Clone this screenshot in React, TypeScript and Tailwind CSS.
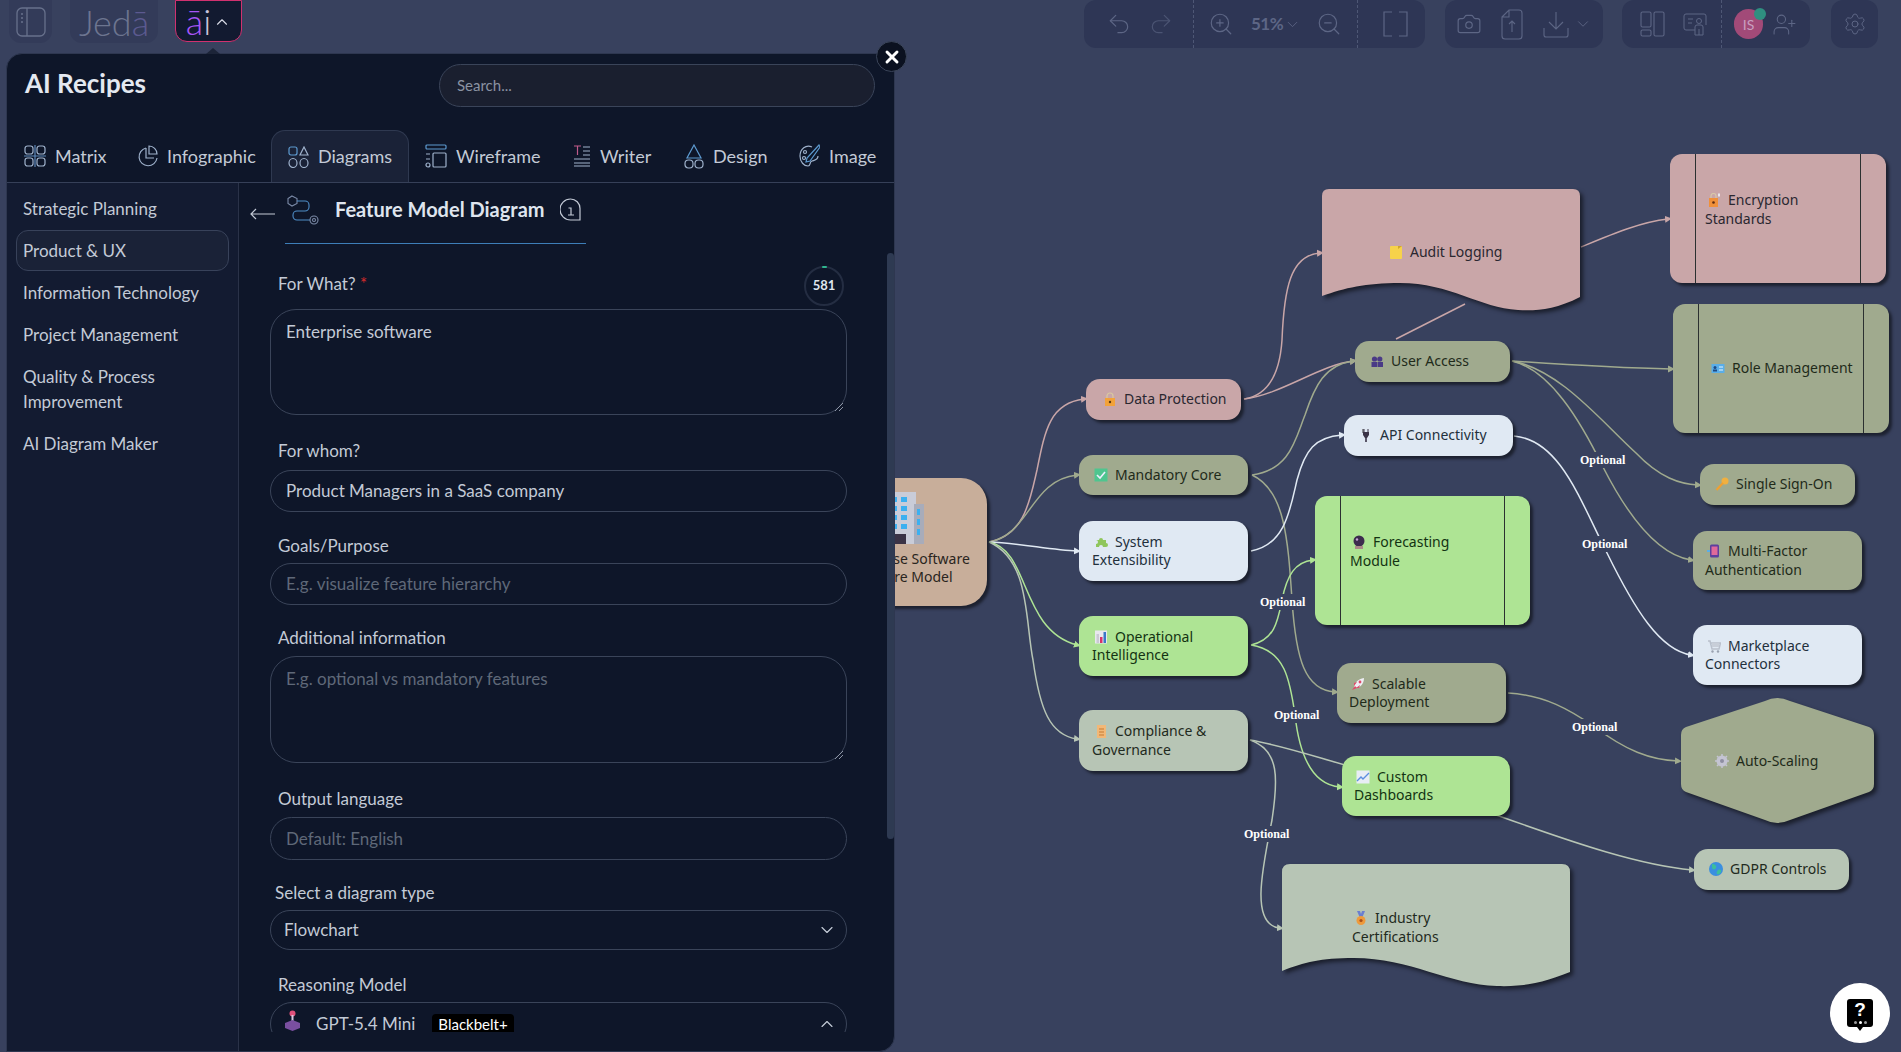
import { ChevronDown, ChevronUp, Redo2, Settings, Undo2, X, ZoomIn, ZoomOut, Camera, UserPlus } from "lucide-react";
import type { ReactNode } from "react";

const ROSE = "#c9a6a8";
const OLIVE = "#a0aa8e";
const ICE = "#e0e9f3";
const LIME = "#aee494";
const SAGE = "#b7c5b5";

const edges: { d: string; c: string; arrow?: boolean }[] = [
  { d: "M989,542 C1025,535 1030,500 1037,470 C1045,430 1050,403 1084,399", c: ROSE },
  { d: "M989,542 C1030,535 1030,480 1077,475", c: OLIVE },
  { d: "M989,542 C1020,543 1050,550 1077,551", c: ICE },
  { d: "M989,542 C1030,550 1020,630 1077,645", c: LIME },
  { d: "M989,542 C1030,560 1025,620 1033,660 C1040,710 1050,735 1077,739", c: SAGE },
  { d: "M1244,399 C1270,395 1280,370 1282,340 C1284,290 1290,255 1320,253", c: ROSE },
  { d: "M1244,399 C1280,395 1320,365 1353,361", c: ROSE },
  { d: "M1252,475 C1290,470 1295,440 1305,415 C1315,385 1325,365 1353,361", c: OLIVE },
  { d: "M1252,475 C1285,490 1288,540 1292,600 C1296,660 1305,690 1335,692", c: OLIVE },
  { d: "M1251,551 C1285,545 1290,510 1297,480 C1305,450 1315,437 1342,435", c: ICE },
  { d: "M1251,645 C1275,640 1278,620 1282,600 C1287,575 1295,562 1313,560", c: LIME },
  { d: "M1251,645 C1285,650 1290,680 1295,715 C1300,760 1315,785 1340,787", c: LIME },
  { d: "M1250,740 C1280,745 1310,755 1345,765 L1499,816 C1580,845 1640,865 1692,870", c: SAGE },
  { d: "M1250,740 C1280,750 1278,780 1272,820 C1262,870 1250,925 1280,928", c: SAGE },
  { d: "M1512,361 C1570,365 1620,368 1671,369", c: OLIVE },
  { d: "M1512,361 C1560,370 1600,420 1636,453 C1660,478 1680,484 1698,485", c: OLIVE },
  { d: "M1512,361 C1550,370 1580,420 1603,467 C1630,520 1660,555 1691,560", c: OLIVE },
  { d: "M1514,436 C1560,440 1580,500 1607,553 C1635,610 1660,650 1691,655", c: ICE },
  { d: "M1508,693 C1545,695 1570,710 1595,727 C1625,750 1650,760 1678,761", c: OLIVE },
  { d: "M1581,247 C1610,235 1640,222 1668,219", c: ROSE },
  { d: "M1396,339 L1465,304", c: ROSE },
];

const edgeLabels = [
  { x: 1601, y: 460 },
  { x: 1603, y: 544 },
  { x: 1281, y: 602 },
  { x: 1295, y: 715 },
  { x: 1593, y: 727 },
  { x: 1265, y: 834 },
];

const Em = ({ children }: { children: ReactNode }) => (
  <svg viewBox="0 0 14 14" className="mr-[7px] inline-block h-[14px] w-[14px] align-[-2px]">
    {children}
  </svg>
);

const emoji: Record<string, ReactNode> = {
  lock: <><path d="M4 6V4a3 3 0 0 1 6 0v2" fill="none" stroke="#d9c9a0" strokeWidth="1.2" /><rect x="2" y="6" width="10" height="8" fill="#f2a23a" /><circle cx="7" cy="10" r="1.2" fill="#5b3a12" /></>,
  check: <><rect x="0.5" y="0.5" width="13" height="13" fill="#4fc58f" /><path d="M3 7l3 3 5-6" fill="none" stroke="#eef" strokeWidth="1.6" /></>,
  puzzle: <path d="M2 5h3a2 2 0 1 1 4 0h3v3a2 2 0 1 1 0 4H9a2 2 0 1 0-4 0H2V9a2 2 0 1 0 0-4z" fill="#8fc65c" />,
  chart: <><rect x="1" y="0.5" width="12" height="13" fill="#e8e8ee" /><rect x="2.5" y="4" width="2.5" height="9" fill="#c9c9d4" /><rect x="6" y="7" width="2.5" height="6" fill="#d8326a" /><rect x="9.5" y="2" width="2.5" height="11" fill="#3a78c8" /></>,
  scroll: <><rect x="3" y="1" width="9" height="13" fill="#f2b878" /><path d="M5 5h5M5 8h5M5 11h5" stroke="#c77a32" /></>,
  note: <><rect x="1" y="1" width="12" height="13" rx="1" fill="#f7d24a" /><path d="M9 1l4 0-4 3z" fill="#cfa52c" /></>,
  people: <><circle cx="4.5" cy="5" r="2.6" fill="#4a3a86" /><circle cx="9.8" cy="5" r="2.6" fill="#4a3a86" /><rect x="1.5" y="8" width="5.5" height="5" fill="#4a3a86" /><rect x="7.5" y="8" width="5.5" height="5" fill="#4a3a86" /></>,
  plug: <><path d="M4 1v4M10 1v0" stroke="#333" /><path d="M4 4h6v3l-2 3H6L4 7z" fill="#3a3346" /><rect x="6.2" y="9" width="1.6" height="5" fill="#3a3346" /><path d="M5 1v3M9 1v3" stroke="#3a3346" /></>,
  crystal: <><circle cx="7" cy="6" r="5.5" fill="#3d2b4e" /><circle cx="5" cy="4.5" r="1.2" fill="#c8a6d8" /><rect x="3" y="11" width="8" height="3" fill="#a88" /></>,
  rocket: <><path d="M3 11C3 6 7 2 13 1c0 6-4 10-9 10z" fill="#eeeef4" /><circle cx="9" cy="5" r="1.4" fill="#e04a6a" /><path d="M1 13l3-4 2 2z" fill="#e04a6a" /><path d="M3 6l3-1-3 4zM8 11l1-3-4 3z" fill="#e04a6a" /></>,
  graph: <><rect x="0.5" y="0.5" width="13" height="13" fill="#e8edf5" /><path d="M1 11l4-4 2 2 6-6" fill="none" stroke="#5c8fe0" strokeWidth="1.4" /></>,
  medal: <><path d="M3 0l3 7h2l3-7-3 0-1 3-1-3z" fill="#6a7fd0" /><circle cx="7" cy="9.5" r="4.5" fill="#ee9a3c" /><circle cx="7" cy="9.5" r="1.6" fill="#a8501c" /></>,
  key: <><circle cx="10" cy="4" r="3.5" fill="#f0b040" /><path d="M8 6L1.5 13" stroke="#f0a030" strokeWidth="2.2" /></>,
  id: <><rect x="0.5" y="3" width="13" height="9" fill="#5aaee8" /><circle cx="4" cy="6.5" r="1.5" fill="#1c4a86" /><rect x="2" y="8.5" width="4" height="2" fill="#1c4a86" /><path d="M8 6h4M8 9h4" stroke="#e8f4ff" /></>,
  phone: <><rect x="3" y="0.5" width="9" height="13" rx="1.5" fill="#5c3f9e" /><rect x="4.5" y="2.5" width="6" height="8.5" fill="#e06a9a" /><path d="M0 7h3" stroke="#5aaee8" strokeWidth="2" /></>,
  cart: <><path d="M1 2h2l2 8h7l1.500-6H4" fill="none" stroke="#b9c0cc" strokeWidth="1.5" /><rect x="5" y="4" width="7" height="4" fill="#c8ced8" /><circle cx="5.500" cy="12.500" r="1.200" fill="#9aa2b0" /><circle cx="11" cy="12.500" r="1.200" fill="#9aa2b0" /></>,
  gear: <><circle cx="7" cy="7" r="5.500" fill="#c4c4d2" /><circle cx="7" cy="7" r="2" fill="#8e8ea2" /><path d="M7 0v2M7 12v2M0 7h2M12 7h2M2 2l1.500 1.500M10.500 10.500L12 12M12 2l-1.500 1.500M3.500 10.500L2 12" stroke="#c4c4d2" strokeWidth="1.500" /></>,
  globe: <><circle cx="7" cy="7" r="7" fill="#3a8fe0" /><path d="M3 2c3 0 5 2 4 4S3 8 3 5zM9 8c2-1 4 0 3 2s-3 3-4 2 0-3 1-4z" fill="#3cbf9a" /></>,
  lockkey: <><rect x="2" y="5" width="9" height="9" fill="#f0903a" /><path d="M4 5V3a2.500 2.500 0 0 1 5 0v2" fill="none" stroke="#d8c8a8" strokeWidth="1.200" /><circle cx="6.500" cy="9.500" r="1.300" fill="#5b2a12" /><rect x="11" y="0.500" width="2" height="3" fill="#e8e8f0" /></>,
};

type NodeData = {
  x: string;
  bg: string;
  fg: string;
  pl: string;
  icon: string;
  first: string;
  second?: string;
};

const nodes: NodeData[] = [
  { x: "left-[1086px] top-[379px] w-[155px] h-[41px] rounded-[14px]", bg: "bg-[#c9a6a8]", fg: "text-[#2a2730]", pl: "pl-[15px]", icon: "lock", first: "Data Protection" },
  { x: "left-[1079px] top-[455px] w-[169px] h-[40px] rounded-[14px]", bg: "bg-[#a0aa8e]", fg: "text-[#1f2a1a]", pl: "pl-[13px]", icon: "check", first: "Mandatory Core" },
  { x: "left-[1079px] top-[521px] w-[169px] h-[60px] rounded-[14px]", bg: "bg-[#e0e9f3]", fg: "text-[#23303c]", pl: "pl-[13px]", icon: "puzzle", first: "System", second: "Extensibility" },
  { x: "left-[1079px] top-[616px] w-[169px] h-[60px] rounded-[14px]", bg: "bg-[#aee494]", fg: "text-[#133312]", pl: "pl-[13px]", icon: "chart", first: "Operational", second: "Intelligence" },
  { x: "left-[1079px] top-[710px] w-[169px] h-[61px] rounded-[14px]", bg: "bg-[#b7c5b5]", fg: "text-[#1f2a20]", pl: "pl-[13px]", icon: "scroll", first: "Compliance &", second: "Governance" },
  { x: "left-[1355px] top-[341px] w-[155px] h-[41px] rounded-[14px]", bg: "bg-[#a0aa8e]", fg: "text-[#1f2a1a]", pl: "pl-[13px]", icon: "people", first: "User Access" },
  { x: "left-[1344px] top-[415px] w-[169px] h-[41px] rounded-[14px]", bg: "bg-[#e0e9f3]", fg: "text-[#23303c]", pl: "pl-[13px]", icon: "plug", first: "API Connectivity" },
  { x: "left-[1700px] top-[464px] w-[155px] h-[41px] rounded-[14px]", bg: "bg-[#a0aa8e]", fg: "text-[#1f2a1a]", pl: "pl-[13px]", icon: "key", first: "Single Sign-On" },
  { x: "left-[1693px] top-[531px] w-[169px] h-[59px] rounded-[14px]", bg: "bg-[#a0aa8e]", fg: "text-[#1f2a1a]", pl: "pl-[12px]", icon: "phone", first: "Multi-Factor", second: "Authentication" },
  { x: "left-[1693px] top-[625px] w-[169px] h-[60px] rounded-[14px]", bg: "bg-[#e0e9f3]", fg: "text-[#23303c]", pl: "pl-[12px]", icon: "cart", first: "Marketplace", second: "Connectors" },
  { x: "left-[1337px] top-[663px] w-[169px] h-[60px] rounded-[14px]", bg: "bg-[#a0aa8e]", fg: "text-[#1f2a1a]", pl: "pl-[12px]", icon: "rocket", first: "Scalable", second: "Deployment" },
  { x: "left-[1342px] top-[756px] w-[168px] h-[60px] rounded-[14px]", bg: "bg-[#aee494]", fg: "text-[#133312]", pl: "pl-[12px]", icon: "graph", first: "Custom", second: "Dashboards" },
  { x: "left-[1694px] top-[849px] w-[155px] h-[41px] rounded-[14px]", bg: "bg-[#b7c5b5]", fg: "text-[#1f2a20]", pl: "pl-[13px]", icon: "globe", first: "GDPR Controls" },
];

const subroutines: NodeData[] = [
  { x: "left-[1670px] top-[154px] w-[216px] h-[129px] rounded-[12px]", bg: "bg-[#c9a6a8]", fg: "text-[#2a2730]", pl: "pl-[9px]", icon: "lockkey", first: "Encryption", second: "Standards" },
  { x: "left-[1673px] top-[304px] w-[216px] h-[129px] rounded-[12px]", bg: "bg-[#a0aa8e]", fg: "text-[#1f2a1a]", pl: "pl-[10px]", icon: "id", first: "Role Management" },
  { x: "left-[1315px] top-[496px] w-[215px] h-[129px] rounded-[12px]", bg: "bg-[#aee494]", fg: "text-[#133312]", pl: "pl-[9px]", icon: "crystal", first: "Forecasting", second: "Module" },
];

const NodeText = ({ n }: { n: NodeData }) => (
  <div className="text-[14px] leading-[18.5px]">
    <div className="whitespace-nowrap pl-[2px]">
      <Em>{emoji[n.icon]}</Em>
      {n.first}
    </div>
    {n.second && <div className="whitespace-nowrap">{n.second}</div>}
  </div>
);

const Canvas = () => (
  <div className="absolute inset-0 font-['Noto_Sans',sans-serif]">
    <svg className="absolute inset-0" width="1901" height="1052" fill="none">
      <defs>
        {[ROSE, OLIVE, ICE, LIME, SAGE].map((c) => (
          <marker key={c} id={`a${c.slice(1)}`} markerWidth="8" markerHeight="8" refX="3" refY="4" orient="auto" markerUnits="userSpaceOnUse">
            <path d="M0,0.500 L7,4 L0,7.500 Z" fill={c} />
          </marker>
        ))}
      </defs>
      {edges.map((e, i) => (
        <path key={i} d={e.d} stroke={e.c} strokeWidth="1.5" markerEnd={e.d.startsWith("M1396") ? undefined : `url(#a${e.c.slice(1)})`} />
      ))}
    </svg>

    {/* wave and hexagon nodes are real drawings, text sits on top */}
    <svg className="absolute inset-0 drop-shadow-[3px_3px_2px_rgba(0,0,0,0.55)]" width="1901" height="1052">
      <path d="M1329,189 H1573 Q1580,189 1580,196 V297 C1555,310 1535,311 1518,310 C1480,308 1450,283 1400,283 C1365,283 1345,288 1322,296 V196 Q1322,189 1329,189 Z" fill={ROSE} />
      <path d="M1290,864 H1562 Q1570,864 1570,872 V972 C1545,982 1525,987 1497,986 C1450,985 1410,958 1354,958 C1320,958 1305,962 1282,971 V872 Q1282,864 1290,864 Z" fill={SAGE} />
      <path d="M1765,701 Q1777,695 1790,701 L1869,727 Q1874,729 1874,735 V784 Q1874,790 1869,792 L1790,820 Q1777,826 1765,820 L1686,792 Q1681,790 1681,784 V735 Q1681,729 1686,727 Z" fill={OLIVE} />
    </svg>
    <div className="absolute left-[1387px] top-[243px] text-[#2a2730]">
      <NodeText n={{ x: "", bg: "", fg: "", pl: "", icon: "note", first: "Audit Logging" }} />
    </div>
    <div className="absolute left-[1352px] top-[909px] text-[#1f2a20]">
      <NodeText n={{ x: "", bg: "", fg: "", pl: "", icon: "medal", first: "Industry", second: "Certifications" }} />
    </div>
    <div className="absolute left-[1713px] top-[752px] text-[#1f2a1a]">
      <NodeText n={{ x: "", bg: "", fg: "", pl: "", icon: "gear", first: "Auto-Scaling" }} />
    </div>

    {/* root */}
    <div className="absolute left-[823px] top-[478px] flex h-[128px] w-[164px] flex-col items-center rounded-[26px] bg-[#c8ae9a] pt-[12px] text-[14px] leading-[18px] text-[#2a2520] shadow-[3px_3px_3px_rgba(0,0,0,0.5)]">
      <svg viewBox="0 0 50 54" className="h-[54px] w-[50px]">
        <rect x="6" y="2" width="30" height="52" fill="#c9ccd8" />
        <rect x="34" y="14" width="10" height="40" fill="#a8acba" />
        <g fill="#3cb0f0">
          <rect x="11" y="7" width="6" height="5" />
          <rect x="21" y="7" width="6" height="5" />
          <rect x="11" y="16" width="6" height="5" />
          <rect x="21" y="16" width="6" height="5" />
          <rect x="11" y="25" width="6" height="5" />
          <rect x="21" y="25" width="6" height="5" />
          <rect x="11" y="34" width="6" height="5" />
          <rect x="21" y="34" width="6" height="5" />
          <rect x="37" y="19" width="3" height="6" />
          <rect x="37" y="29" width="3" height="6" />
          <rect x="37" y="39" width="3" height="6" />
        </g>
        <rect x="14" y="44" width="12" height="10" fill="#3a3346" />
      </svg>
      <div className="mt-[6px] whitespace-nowrap text-center">
        Enterprise Software
        <br />
        Feature Model
      </div>
    </div>

    {nodes.map((n) => (
      <div key={n.first} className={`absolute flex items-center shadow-[3px_3px_3px_rgba(0,0,0,0.5)] ${n.x} ${n.bg} ${n.fg} ${n.pl}`}>
        <NodeText n={n} />
      </div>
    ))}

    {subroutines.map((n) => (
      <div key={n.first} className={`absolute flex shadow-[3px_3px_3px_rgba(0,0,0,0.5)] ${n.x} ${n.bg} ${n.fg}`}>
        <div className="w-[26px] border-r border-[#2b3030]" />
        <div className={`flex flex-1 items-center ${n.pl} ${n.first === "Forecasting" || n.first === "Encryption" ? "pb-[18px]" : ""}`}>
          <NodeText n={n} />
        </div>
        <div className="w-[26px] border-l border-[#2b3030]" />
      </div>
    ))}

    {edgeLabels.map((l) => (
      <div
        key={l.x}
        style={{ left: l.x - 21, top: l.y - 8 }}
        className="absolute bg-[#38415e] font-['Liberation_Serif',serif] text-[12px] leading-[16px] font-bold text-white"
      >
        Optional
      </div>
    ))}
  </div>
);

const Dash = ({ ml }: { ml: string }) => <div className={`h-full border-l border-dashed border-[#4e5775] ${ml}`} />;

const TopBar = () => (
  <div className="relative flex h-[48px] items-start text-[#5d6685]">
    <div className="ml-[9px] flex h-[43px] w-[43px] items-center justify-center rounded-b-[12px] bg-[#333b59]">
      <svg width="30" height="30" viewBox="0 0 30 30" fill="none" stroke="#68718c" strokeWidth="1.3">
        <rect x="1" y="1" width="28" height="28" rx="5" />
        <path d="M11 1v28M5 7h2M5 11h2M5 15h2" />
      </svg>
    </div>
    <div className="ml-[18px] flex h-[43px] w-[88px] items-center justify-center rounded-b-[12px] bg-[#333b59] font-['Lato',sans-serif] text-[36px] leading-[40px] font-light text-[#6d7590]">
      Jed<span className="text-[#5c5a90]">ā</span>
    </div>
    <div className="ml-[17px] flex h-[42px] w-[67px] items-center justify-center rounded-b-[12px] border border-[#d1316f] bg-[#121a30] font-['Lato',sans-serif] text-[36px] leading-[36px] font-light text-[#a855f7]">
      ā<span className="text-[#c9c4dc]">i</span>
      <ChevronUp size={18} strokeWidth={1.5} className="mt-[2px] ml-[2px] text-[#d8dbe6]" />
    </div>

    <div className="ml-auto flex h-[48px] w-[341px] items-center rounded-[12px] bg-[#2e3655]">
      <Undo2 size={26} strokeWidth={1.1} className="ml-[22px]" />
      <Redo2 size={26} strokeWidth={1.1} className="ml-[16px] text-[#4b5473]" />
      <Dash ml="ml-[19px]" />
      <ZoomIn size={26} strokeWidth={1.1} className="ml-[14px]" />
      <span className="ml-[17px] w-[28px] font-['Lato',sans-serif] text-[17px] font-bold tracking-[-0.5px]">51%</span>
      <ChevronDown size={17} strokeWidth={1.2} className="ml-[5px]" />
      <ZoomOut size={26} strokeWidth={1.1} className="ml-[15px]" />
      <Dash ml="ml-[15px]" />
      <svg width="25" height="26" viewBox="0 0 25 26" fill="none" stroke="currentColor" strokeWidth="1.2" className="ml-[25px]">
        <path d="M9 1H1v24h8M16 1h8v24h-8" />
      </svg>
    </div>

    <div className="ml-[20px] flex h-[48px] w-[158px] items-center rounded-[12px] bg-[#2e3655]">
      <Camera size={26} strokeWidth={1.1} className="ml-[11px]" />
      <svg width="22" height="31" viewBox="0 0 22 31" fill="none" stroke="currentColor" strokeWidth="1.1" className="ml-[19px]">
        <path d="M1 8l7-7h10a3 3 0 0 1 3 3v23a3 3 0 0 1-3 3H4a3 3 0 0 1-3-3zM8 1v7H1M11 23V12M8 15l3-3 3 3" />
      </svg>
      <svg width="26" height="27" viewBox="0 0 26 27" fill="none" stroke="currentColor" strokeWidth="1.1" className="ml-[20px]">
        <path d="M13 1v17M6 11l7 7 7-7M1 17v7a2 2 0 0 0 2 2h20a2 2 0 0 0 2-2v-7" />
      </svg>
      <ChevronDown size={18} strokeWidth={1.2} className="ml-[5px]" />
    </div>

    <div className="ml-[19px] flex h-[48px] w-[188px] items-center rounded-[12px] bg-[#2e3655]">
      <svg width="25" height="26" viewBox="0 0 25 26" fill="none" stroke="currentColor" strokeWidth="1.1" className="ml-[18px]">
        <rect x="1" y="1" width="10" height="15" rx="1.500" />
        <rect x="1" y="19" width="10" height="6" rx="1.500" />
        <rect x="14" y="1" width="10" height="24" rx="1.500" />
      </svg>
      <svg width="24" height="23" viewBox="0 0 24 23" fill="none" stroke="currentColor" strokeWidth="1" className="ml-[18px]">
        <path d="M12 17H3a2 2 0 0 1-2-2V3a2 2 0 0 1 2-2h18a2 2 0 0 1 2 2v9M5 6h5M5 10h4" />
        <circle cx="16" cy="8" r="2.500" />
        <path d="M12 22v-8a2 2 0 0 1 2-2h4a2 2 0 0 1 2 2v8h-8zM16 16v6" />
      </svg>
      <Dash ml="ml-[14px]" />
      <div className="relative ml-[12px] flex h-[30px] w-[29px] items-center justify-center rounded-full bg-[#a24a78] font-['Lato',sans-serif] text-[14px] text-[#c9a0c0]">
        IS
        <span className="absolute top-[-1px] right-[-3px] h-[12px] w-[12px] rounded-full bg-[#2f8f80]" />
      </div>
      <UserPlus size={25} strokeWidth={1} className="ml-[9px]" />
    </div>

    <div className="mr-[23px] ml-[21px] flex h-[48px] w-[47px] items-center justify-center rounded-[12px] bg-[#2e3655]">
      <Settings size={24} strokeWidth={1} />
    </div>
  </div>
);

const IconStroke = "#9fb2cc";

const tabs: { label: string; w: string; icon: ReactNode; active?: boolean }[] = [
  {
    label: "Matrix",
    w: "w-[114px]",
    icon: (
      <svg width="22" height="22" viewBox="0 0 22 22" fill="none" stroke={IconStroke} strokeWidth="1.2">
        <rect x="1" y="1" width="8" height="8" rx="2.500" />
        <rect x="13" y="1" width="8" height="8" rx="2.500" />
        <rect x="1" y="13" width="8" height="8" rx="2.500" />
        <rect x="13" y="13" width="8" height="8" rx="2.500" />
        <path d="M0 11h22M11 0v22" stroke="#5d87b8" />
      </svg>
    ),
  },
  {
    label: "Infographic",
    w: "w-[149px]",
    icon: (
      <svg width="20" height="22" viewBox="0 0 20 22" fill="none" stroke={IconStroke} strokeWidth="1.2">
        <path d="M8 3a9 9 0 1 0 11 10" />
        <path d="M11 1a8 8 0 0 1 8 8h-8zM8 3v10h8" />
      </svg>
    ),
  },
  {
    label: "Diagrams",
    w: "w-[138px]",
    active: true,
    icon: (
      <svg width="21" height="22" viewBox="0 0 21 22" fill="none" stroke={IconStroke} strokeWidth="1.2">
        <rect x="1" y="1" width="8" height="8" rx="2" stroke="#5d9ad0" />
        <path d="M16 1l4 8h-8z" />
        <ellipse cx="5" cy="17" rx="4" ry="4.500" />
        <ellipse cx="16" cy="17" rx="4" ry="4.500" />
      </svg>
    ),
  },
  {
    label: "Wireframe",
    w: "w-[148px]",
    icon: (
      <svg width="22" height="24" viewBox="0 0 22 24" fill="none" stroke={IconStroke} strokeWidth="1.2">
        <rect x="1" y="1" width="20" height="4" rx="1" stroke="#5d9ad0" />
        <rect x="8" y="9" width="13" height="14" rx="1" />
        <path d="M1 10h4M1 15h4" />
        <circle cx="3" cy="21" r="2" />
      </svg>
    ),
  },
  {
    label: "Writer",
    w: "w-[111px]",
    icon: (
      <svg width="18" height="22" viewBox="0 0 18 22" fill="none" stroke={IconStroke} strokeWidth="1.2">
        <path d="M1 1h7M4.500 1v9" stroke="#c05a8a" />
        <path d="M10 2h7M10 6h7M10 10h7M1 14h16M1 18h16M1 21h16" />
      </svg>
    ),
  },
  {
    label: "Design",
    w: "w-[114px]",
    icon: (
      <svg width="20" height="25" viewBox="0 0 20 25" fill="none" stroke={IconStroke} strokeWidth="1.2">
        <path d="M10 1l7 13H3z" stroke="#5d9ad0" />
        <rect x="1" y="16" width="8" height="8" rx="3.500" />
        <rect x="11" y="16" width="8" height="8" rx="3.500" />
      </svg>
    ),
  },
  {
    label: "Image",
    w: "w-[110px]",
    icon: (
      <svg width="22" height="24" viewBox="0 0 22 24" fill="none" stroke={IconStroke} strokeWidth="1.2">
        <path d="M14 3C8 0 2 5 2 12c0 6 4 10 8 10 3 0 1-4 4-5 3-1 6-1 6-5" />
        <path d="M21 1L9 14l-1 4 4-1L22 3z" stroke="#5d9ad0" />
        <circle cx="7" cy="8" r="1.500" />
        <circle cx="6" cy="14" r="1.500" />
      </svg>
    ),
  },
];

const categories = ["Strategic Planning", "Product & UX", "Information Technology", "Project Management", "Quality & Process Improvement", "AI Diagram Maker"];

const labelCls = "text-[17px] leading-[26px] text-[#c3cad6]";
const inputCls = "flex w-[577px] items-center rounded-full border border-[#3a4459] px-[15px] text-[17px]";
const areaCls = "relative w-[577px] rounded-[26px] border border-[#3a4459] px-[15px] pt-[9px] text-[17px] leading-[26px]";

const Grip = () => (
  <svg width="8" height="8" viewBox="0 0 8 8" stroke="#8d95a5" className="absolute right-[3px] bottom-[3px]">
    <path d="M0 8L8 0M4 8L8 4" />
  </svg>
);

const Panel = () => (
  <div className="absolute top-[53px] left-[6px] flex h-[999px] w-[889px] flex-col rounded-t-[16px] rounded-br-[16px] border border-[#2e3750] bg-[#0e1629] font-['Lato',sans-serif] text-[#c3cad6]">
    {/* little arrow under the ai button */}
    <div className="absolute top-[-6px] left-[199px] h-0 w-0 border-x-[7px] border-b-[6px] border-x-transparent border-b-[#1c2438]" />
    <button className="absolute top-[-13px] right-[-13px] z-10 flex h-[31px] w-[31px] items-center justify-center rounded-full border border-[#3a4459] bg-[#0b1120]">
      <X size={20} strokeWidth={3.5} className="text-white" />
    </button>

    <div className="flex h-[76px] shrink-0 items-start">
      <h1 className="mt-[11px] ml-[18px] text-[26px] leading-[36px] font-bold text-[#e4e9f1]">AI Recipes</h1>
      <div className="mt-[10px] mr-[19px] ml-auto flex h-[43px] w-[436px] items-center rounded-full border border-[#3a4459] bg-[#1a1f2f] pl-[17px] text-[15px] text-[#8a92a2]">
        Search...
      </div>
    </div>

    <div className="flex h-[53px] shrink-0 items-stretch border-b border-[#364058] pl-[1px]">
      {tabs.map((t) => (
        <div
          key={t.label}
          className={`flex shrink-0 items-center gap-[9px] pl-[16px] text-[18px] text-[#c3cad6] ${t.w} ${
            t.active ? "rounded-t-[14px] border-x border-t border-[#2f3950] bg-[#1a2237]" : ""
          }`}
        >
          {t.icon}
          <span className="whitespace-nowrap">{t.label}</span>
        </div>
      ))}
    </div>

    <div className="flex min-h-0 flex-1">
      <aside className="w-[232px] shrink-0 border-r border-[#2a3248] bg-[#131b31] pt-[5px] pr-[9px] pl-[9px]">
        {categories.map((c) => (
          <div
            key={c}
            className={`mb-[1px] rounded-[12px] border py-[7px] pl-[6px] text-[17px] leading-[25px] ${
              c === "Product & UX" ? "border-[#38425a] bg-[#1a2237]" : "border-transparent"
            }`}
          >
            {c}
          </div>
        ))}
      </aside>

      <div className="flex min-w-0 flex-1">
        <div className="h-[849px] flex-1 overflow-hidden pl-[31px]">
          <div className="ml-[-20px] flex h-[61px] items-center">
            <svg width="25" height="12" viewBox="0 0 25 12" fill="none" stroke="#c3cad6" strokeWidth="1.2">
              <path d="M25 6H1M6 1L1 6l5 5" />
            </svg>
            <div className="ml-[10px] flex h-[61px] w-[301px] items-center border-b border-[#3d7eb8] pb-[8px]">
              <svg width="32" height="31" viewBox="0 0 32 31" fill="none" stroke="#7c8ba8" strokeWidth="1.1" className="ml-[2px]">
                <path d="M4 2l5 2.500v5L4 12 0 9.500v-5z" transform="translate(1 0)" />
                <path d="M10 7h8a4 4 0 0 1 4 4v2a4 4 0 0 1-4 4h-8a4 4 0 0 0-4 4v1a4 4 0 0 0 4 4h13" stroke="#4f8ec8" />
                <circle cx="27" cy="26" r="4" />
                <circle cx="27" cy="26" r="1.500" />
              </svg>
              <span className="ml-[16px] whitespace-nowrap text-[20px] font-bold text-[#dfe5ee]">Feature Model Diagram</span>
              <svg width="21" height="23" viewBox="0 0 21 23" fill="none" stroke="#c3cad6" strokeWidth="1.2" className="ml-[15px]">
                <path d="M10.500 1a9.500 9.500 0 1 0 0 21H20v-11.500A9.500 9.500 0 0 0 10.500 1z" />
                <path d="M10.500 6v0M8.500 10h2.500v7M8 17h6" />
              </svg>
            </div>
          </div>

          <div className="mt-[22px] flex w-[577px] items-start justify-between">
            <div className={`mt-[5px] ml-[8px] ${labelCls}`}>
              For What? <span className="text-[#d92b2b]">*</span>
            </div>
            <div className="relative mr-[3px] flex h-[40px] w-[40px] items-center justify-center rounded-full border-2 border-[#242d42] text-[13px] font-bold text-[#dfe5ee]">
              581
              <span className="absolute top-[-2px] left-[16px] h-[2px] w-[5px] rounded-full bg-[#2fb58f]" />
            </div>
          </div>
          <div className={`mt-[3px] h-[106px] text-[#c3cad6] ${areaCls}`}>
            Enterprise software
            <Grip />
          </div>

          <div className={`mt-[23px] ml-[8px] ${labelCls}`}>For whom?</div>
          <div className={`mt-[6px] h-[42px] text-[#c3cad6] ${inputCls}`}>Product Managers in a SaaS company</div>

          <div className={`mt-[21px] ml-[8px] ${labelCls}`}>Goals/Purpose</div>
          <div className={`mt-[4px] h-[42px] text-[#5f6878] ${inputCls}`}>E.g. visualize feature hierarchy</div>

          <div className={`mt-[20px] ml-[8px] ${labelCls}`}>Additional information</div>
          <div className={`mt-[5px] h-[107px] text-[#5f6878] ${areaCls}`}>
            E.g. optional vs mandatory features
            <Grip />
          </div>

          <div className={`mt-[23px] ml-[8px] ${labelCls}`}>Output language</div>
          <div className={`mt-[5px] h-[43px] text-[#5f6878] ${inputCls}`}>Default: English</div>

          <div className={`mt-[20px] ml-[5px] ${labelCls}`}>Select a diagram type</div>
          <div className={`mt-[4px] h-[40px] justify-between text-[#c3cad6] ${inputCls} !pr-[9px] !pl-[13px]`}>
            Flowchart
            <ChevronDown size={20} strokeWidth={1.4} />
          </div>

          <div className={`mt-[22px] ml-[8px] ${labelCls}`}>Reasoning Model</div>
          <div className={`mt-[4px] h-[44px] text-[#c3cad6] ${inputCls} !pr-[9px] !pl-[13px]`}>
            <svg width="17" height="22" viewBox="0 0 17 22" className="mb-[6px]">
              <circle cx="8.500" cy="3.500" r="3" fill="#e0507a" />
              <rect x="7.500" y="5" width="2" height="8" fill="#d8c8e0" />
              <path d="M1 13l7.500-3 7.500 3v5l-7.500 3L1 18z" fill="#7a4fa0" />
            </svg>
            <span className="ml-[15px]">GPT-5.4 Mini</span>
            <span className="ml-[17px] rounded-[4px] bg-black px-[6px] text-[15px] leading-[21px] text-white">Blackbelt+</span>
            <ChevronUp size={20} strokeWidth={1.4} className="ml-auto" />
          </div>
        </div>

        <div className="mt-[70px] mr-[0px] h-[586px] w-[7px] shrink-0 rounded-full bg-[#2e3a52]" />
      </div>
    </div>
  </div>
);

const HelpButton = () => (
  <div className="absolute top-[983px] left-[1830px] flex h-[60px] w-[60px] items-center justify-center rounded-full bg-white">
    <div className="relative flex h-[28px] w-[26px] items-start justify-center rounded-[3px] bg-black font-['Liberation_Sans',sans-serif] text-[19px] leading-[22px] font-bold text-white">
      ?
      <span className="absolute bottom-[-4px] left-[10px] h-0 w-0 border-x-[3px] border-t-[4px] border-x-transparent border-t-black" />
      <span className="absolute bottom-[3px] left-[7px] flex gap-[2px]">
        <i className="h-[3px] w-[3px] rounded-full bg-[#9a9a9a]" />
        <i className="h-[3px] w-[3px] rounded-full bg-white" />
        <i className="h-[3px] w-[3px] rounded-full bg-[#9a9a9a]" />
      </span>
    </div>
  </div>
);

export default function App() {
  return (
    <div className="relative h-[1052px] w-[1901px] overflow-hidden bg-[#38415e]">
      <Canvas />
      <TopBar />
      <Panel />
      <HelpButton />
    </div>
  );
}
